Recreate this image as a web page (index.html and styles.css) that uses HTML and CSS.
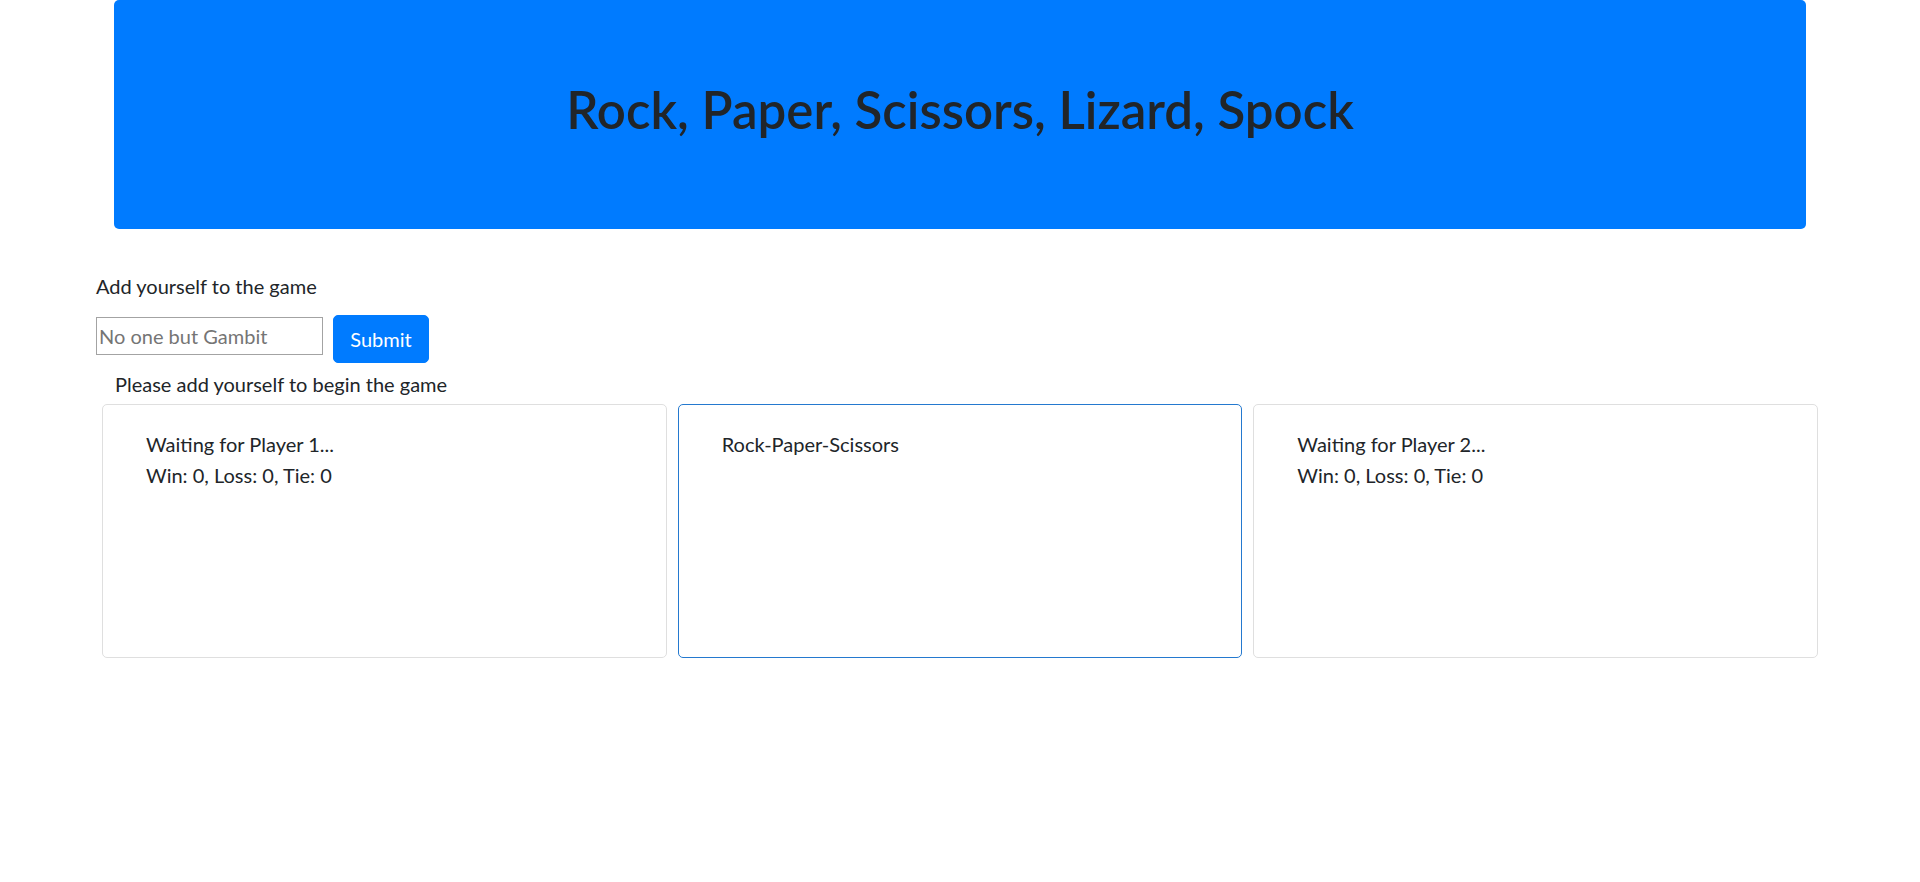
FILE: index.html
```html
<!DOCTYPE html>
<html lang="en">
<head>
<meta charset="utf-8">
<title>Rock, Paper, Scissors, Lizard, Spock</title>
<link rel="stylesheet" href="styles.css">
</head>
<body>
<header class="jumbotron">
  <h1 class="title">Rock, Paper, Scissors, Lizard, Spock</h1>
</header>
<section class="join">
  <div class="join-label">Add yourself to the game</div>
  <form class="join-form">
    <input class="name-input" type="text" placeholder="No one but Gambit">
    <button class="btn-submit" type="button">Submit</button>
  </form>
  <div class="status">Please add yourself to begin the game</div>
</section>
<main class="board">
  <div class="card">
    <div class="card-line">Waiting for Player 1...</div>
    <div class="card-line">Win: 0, Loss: 0, Tie: 0</div>
  </div>
  <div class="card card-center">
    <div class="card-line">Rock-Paper-Scissors</div>
  </div>
  <div class="card">
    <div class="card-line">Waiting for Player 2...</div>
    <div class="card-line">Win: 0, Loss: 0, Tie: 0</div>
  </div>
</main>
</body>
</html>
```
FILE: styles.css
```css
html, body {
  margin: 0;
  padding: 0;
  background: #ffffff;
}
body {
  font-family: Lato, "Liberation Sans", sans-serif;
  font-size: 20px;
  line-height: 1.5;
  color: #212529;
}
.jumbotron {
  width: 1692px;
  height: 229px;
  margin: 0 auto;
  padding-bottom: 10px;
  box-sizing: border-box;
  background: #007bff;
  border-radius: 5px;
  display: flex;
  align-items: center;
  justify-content: center;
}
.title {
  margin: 0;
  font-size: 51px;
  font-weight: 600;
  line-height: 1.2;
  color: #212529;
}
.join {
  padding-left: 96px;
  margin-top: 42px;
}
.join-label {
  height: 30px;
}
.join-form {
  display: flex;
  align-items: flex-start;
  gap: 10px;
  margin: 14px 0 0 0;
}
.name-input {
  width: 227px;
  height: 38px;
  margin-top: 2px;
  box-sizing: border-box;
  border: 1px solid #a3a3a3;
  border-radius: 0;
  padding: 0 2px;
  font-family: inherit;
  font-size: 20px;
  color: #212529;
  outline: none;
}
.name-input::placeholder {
  color: #757575;
}
.btn-submit {
  width: 96px;
  height: 48px;
  box-sizing: border-box;
  border: 1px solid #007bff;
  border-radius: 5px;
  background: #007bff;
  color: #ffffff;
  font-family: inherit;
  font-size: 20px;
  line-height: 1.5;
  padding: 7px 15px;
  cursor: pointer;
}
.status {
  padding-left: 19px;
  margin-top: 6px;
}
.board {
  display: grid;
  grid-template-columns: repeat(3, 1fr);
  gap: 11px;
  width: 1716px;
  margin: 5px 0 0 102px;
}
.card {
  height: 254px;
  box-sizing: border-box;
  border: 1px solid #dfdfdf;
  border-radius: 5px;
  padding: 24px 20px 20px 43px;
}
.card-center {
  border-color: #2479cf;
}
.card-line {
  line-height: 31px;
}
```
